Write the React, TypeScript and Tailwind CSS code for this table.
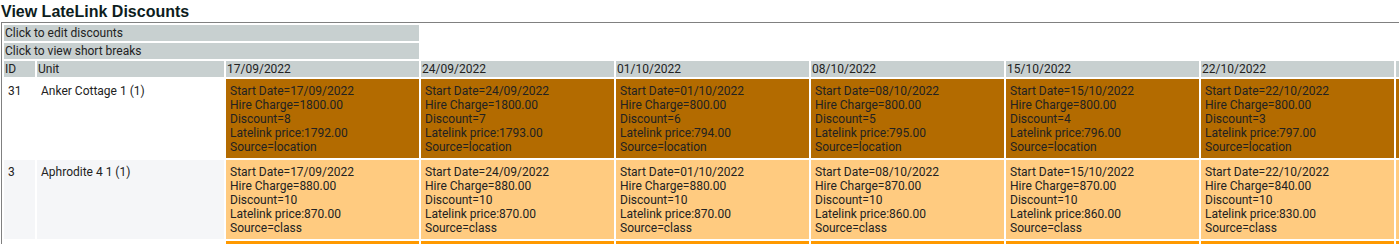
const dates = ['17/09/2022', '24/09/2022', '01/10/2022', '08/10/2022', '15/10/2022', '22/10/2022']

type Cell = { hire: string; discount: number; price: string; source: string }

const units: { id: number; name: string; rowBg: string; cellBg: string; cells: Cell[] }[] = [
  {
    id: 31,
    name: 'Anker Cottage 1 (1)',
    rowBg: 'bg-white',
    cellBg: 'bg-[#b36b00]',
    cells: [
      { hire: '1800.00', discount: 8, price: '1792.00', source: 'location' },
      { hire: '1800.00', discount: 7, price: '1793.00', source: 'location' },
      { hire: '800.00', discount: 6, price: '794.00', source: 'location' },
      { hire: '800.00', discount: 5, price: '795.00', source: 'location' },
      { hire: '800.00', discount: 4, price: '796.00', source: 'location' },
      { hire: '800.00', discount: 3, price: '797.00', source: 'location' },
    ],
  },
  {
    id: 3,
    name: 'Aphrodite 4 1 (1)',
    rowBg: 'bg-[#f5f6f8]',
    cellBg: 'bg-[#ffcb80]',
    cells: [
      { hire: '880.00', discount: 10, price: '870.00', source: 'class' },
      { hire: '880.00', discount: 10, price: '870.00', source: 'class' },
      { hire: '880.00', discount: 10, price: '870.00', source: 'class' },
      { hire: '870.00', discount: 10, price: '860.00', source: 'class' },
      { hire: '870.00', discount: 10, price: '860.00', source: 'class' },
      { hire: '840.00', discount: 10, price: '830.00', source: 'class' },
    ],
  },
]

export default function App() {
  return (
    <div className="h-[244px] w-[1399px] overflow-hidden bg-white text-[#222]">
      <h1 className="h-[22px] pl-[1px] pt-[3px] font-['Liberation_Sans',Arial,sans-serif] text-[16px] font-bold leading-[17px] text-[#0d1d1d]">
        View LateLink Discounts
      </h1>
      <table className="ml-[1px] w-[1590px] max-w-none table-fixed border-separate border-spacing-[2px] border-t border-l border-[#808080] font-['Roboto',sans-serif] text-[12px] leading-[14px]">
        <colgroup>
          <col className="w-[31px]" />
          <col className="w-[187px]" />
          {dates.map(d => (
            <col key={d} className="w-[193px]" />
          ))}
          <col className="w-[193px]" />
        </colgroup>
        <tbody>
          <tr>
            <td colSpan={3} className="h-[16px] bg-[#c8d0d0] px-[1px] py-0 align-middle">
              Click to edit discounts
            </td>
          </tr>
          <tr>
            <td colSpan={3} className="h-[16px] bg-[#c8d0d0] px-[1px] py-0 align-middle">
              Click to view short breaks
            </td>
          </tr>
          <tr>
            <td className="h-[16px] bg-[#c8d0d0] px-[1px] py-0 align-middle">ID</td>
            <td className="h-[16px] bg-[#c8d0d0] px-[1px] py-0 align-middle">Unit</td>
            {dates.map(d => (
              <td key={d} className="h-[16px] bg-[#c8d0d0] px-[1px] py-0 align-middle">
                {d}
              </td>
            ))}
            {/* next week's column, only its edge is in view */}
            <td className="h-[16px] bg-[#c8d0d0]" />
          </tr>
          {units.map(u => (
            <tr key={u.id}>
              <td className={`h-[79px] ${u.rowBg} px-[4px] pt-[5px] align-top`}>{u.id}</td>
              <td className={`${u.rowBg} px-[4px] pt-[5px] align-top`}>{u.name}</td>
              {u.cells.map((c, i) => (
                <td key={i} className={`${u.cellBg} px-[4px] pt-[5px] align-top whitespace-nowrap`}>
                  <div>Start Date={dates[i]}</div>
                  <div>Hire Charge={c.hire}</div>
                  <div>Discount={c.discount}</div>
                  <div>Latelink price:{c.price}</div>
                  <div>Source={c.source}</div>
                </td>
              ))}
              <td className={u.cellBg} />
            </tr>
          ))}
          {/* next unit row, only its top edge is in view */}
          <tr>
            <td className="h-[79px] bg-white" />
            <td className="bg-white" />
            {dates.map(d => (
              <td key={d} className="bg-[#ff9900]" />
            ))}
            <td className="bg-[#ff9900]" />
          </tr>
        </tbody>
      </table>
    </div>
  )
}
